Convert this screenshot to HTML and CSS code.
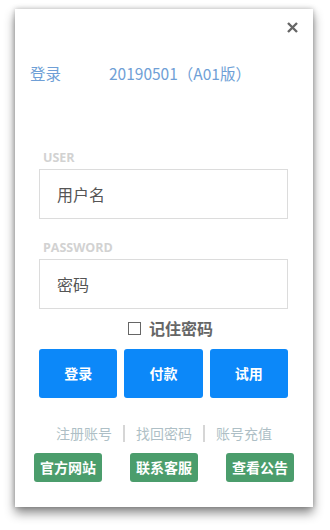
FILE: index.html
```html
<!DOCTYPE html>
<html>
<head>
<meta charset="utf-8">
<link rel="stylesheet" href="styles.css">
</head>
<body>
<div class="card">
  <div class="close">
    <svg width="11" height="11" viewBox="0 0 11 11"><path d="M1 1 L10 10 M10 1 L1 10" stroke="#666" stroke-width="2.4" stroke-linecap="butt"/></svg>
  </div>
  <div class="title"><span class="t1">登录</span><span class="t2">20190501（A01版）</span></div>
  <div class="form">
    <div class="label">USER</div>
    <div class="input">用户名</div>
    <div class="label label-pw">PASSWORD</div>
    <div class="input">密码</div>
    <div class="remember"><span class="box"></span><span>记住密码</span></div>
    <div class="btns">
      <div class="btn">登录</div>
      <div class="btn">付款</div>
      <div class="btn">试用</div>
    </div>
  </div>
  <div class="links">
    <span class="link">注册账号</span><span class="sep"></span><span class="link">找回密码</span><span class="sep"></span><span class="link">账号充值</span>
  </div>
  <div class="greens">
    <div class="gbtn">官方网站</div>
    <div class="gbtn">联系客服</div>
    <div class="gbtn">查看公告</div>
  </div>
</div>
</body>
</html>
```
FILE: styles.css
```css
html, body {
  margin: 0;
  padding: 0;
  background: #fff;
}
body {
  font-family: "Noto Sans CJK SC", "Open Sans", sans-serif;
  width: 330px;
  height: 530px;
  overflow: hidden;
}
.card {
  position: relative;
  margin: 9px 0 0 15px;
  width: 298px;
  height: 498px;
  background: #fff;
  box-shadow: 0 6px 10px rgba(0,0,0,0.45), 0 0 5px rgba(0,0,0,0.25);
}
.close {
  position: absolute;
  top: 13px;
  right: 15px;
  width: 11px;
  height: 11px;
  line-height: 0;
}
.title {
  padding-top: 53px;
  padding-left: 15px;
  height: 22px;
  line-height: 22px;
  font-size: 15.5px;
  color: #6f9fd6;
  display: flex;
}
.t1 { width: 79px; }
.form {
  margin: 0 25px 0 24px;
}
.label {
  margin-top: 66px;
  padding-left: 4px;
  height: 16px;
  line-height: 16px;
  font-family: "Open Sans", sans-serif;
  font-weight: 700;
  font-size: 12.5px;
  color: #d2d2d2;
}
.label-pw { margin-top: 21px; }
.input {
  margin-top: 3px;
  box-sizing: border-box;
  height: 50px;
  border: 1px solid #dcdcdc;
  padding-left: 17px;
  line-height: 48px;
  font-size: 16px;
  color: #555;
}
.remember {
  margin-top: 9px;
  height: 20px;
  line-height: 20px;
  display: flex;
  justify-content: center;
  align-items: center;
  font-size: 16px;
  font-weight: 700;
  color: #666;
  padding-left: 14px;
}
.box {
  box-sizing: border-box;
  width: 13px;
  height: 13px;
  border: 1px solid #666;
  margin-right: 8px;
}
.btns {
  margin-top: 11px;
  display: flex;
  gap: 7px;
}
.btn {
  flex: 1;
  height: 49px;
  line-height: 49px;
  text-align: center;
  background: #0c88f9;
  color: #fff;
  font-weight: 700;
  font-size: 14px;
  border-radius: 3px;
}
.links {
  margin-top: 25px;
  height: 20px;
  line-height: 20px;
  display: flex;
  justify-content: center;
  align-items: center;
  font-size: 14px;
  color: #aebfc6;
}
.sep {
  width: 2px;
  height: 17px;
  background: #d6d6d6;
  margin: 0 11px;
}
.greens {
  margin-top: 10px;
  padding: 0 19px;
  display: flex;
  gap: 28px;
}
.gbtn {
  width: 68px;
  height: 29px;
  line-height: 29px;
  text-align: center;
  background: #4b9d6c;
  color: #fff;
  font-weight: 700;
  font-size: 14px;
  border-radius: 3px;
}
```
